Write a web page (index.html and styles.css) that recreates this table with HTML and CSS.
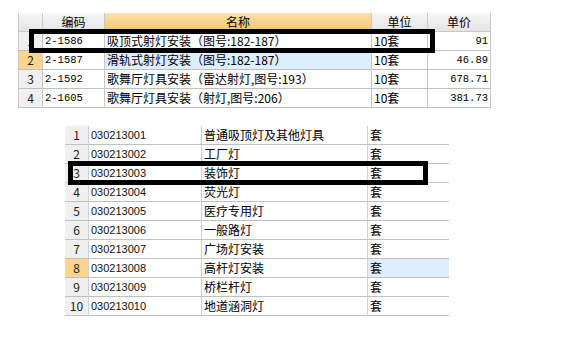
FILE: index.html
```html
<!DOCTYPE html>
<html>
<head>
<meta charset="utf-8">
<link rel="stylesheet" href="styles.css">
</head>
<body>
<div class="page">
  <div class="grid grid-a">
    <div class="row head">
      <div class="c num hd"></div>
      <div class="c code hd">编码</div>
      <div class="c name hd sel">名称</div>
      <div class="c unit hd">单位</div>
      <div class="c price hd">单价</div>
    </div>
    <div class="row">
      <div class="c num">1</div>
      <div class="c code mono">2-1586</div>
      <div class="c name">吸顶式射灯安装（图号:182-187）</div>
      <div class="c unit">10套</div>
      <div class="c price mono">91</div>
    </div>
    <div class="row">
      <div class="c num cur">2</div>
      <div class="c code mono">2-1587</div>
      <div class="c name focus">滑轨式射灯安装（图号:182-187）</div>
      <div class="c unit">10套</div>
      <div class="c price mono">46.89</div>
    </div>
    <div class="row">
      <div class="c num">3</div>
      <div class="c code mono">2-1592</div>
      <div class="c name">歌舞厅灯具安装（雷达射灯,图号:193）</div>
      <div class="c unit">10套</div>
      <div class="c price mono">678.71</div>
    </div>
    <div class="row">
      <div class="c num">4</div>
      <div class="c code mono">2-1605</div>
      <div class="c name">歌舞厅灯具安装（射灯,图号:206）</div>
      <div class="c unit">10套</div>
      <div class="c price mono">381.73</div>
    </div>
    <div class="mark mark-a"></div>
  </div>

  <div class="grid grid-b">
    <div class="row"><div class="c num">1</div><div class="c code2">030213001</div><div class="c name2">普通吸顶灯及其他灯具</div><div class="c unit2">套</div></div>
    <div class="row"><div class="c num">2</div><div class="c code2">030213002</div><div class="c name2">工厂灯</div><div class="c unit2">套</div></div>
    <div class="row"><div class="c num">3</div><div class="c code2">030213003</div><div class="c name2">装饰灯</div><div class="c unit2">套</div></div>
    <div class="row"><div class="c num">4</div><div class="c code2">030213004</div><div class="c name2">荧光灯</div><div class="c unit2">套</div></div>
    <div class="row"><div class="c num">5</div><div class="c code2">030213005</div><div class="c name2">医疗专用灯</div><div class="c unit2">套</div></div>
    <div class="row"><div class="c num">6</div><div class="c code2">030213006</div><div class="c name2">一般路灯</div><div class="c unit2">套</div></div>
    <div class="row"><div class="c num">7</div><div class="c code2">030213007</div><div class="c name2">广场灯安装</div><div class="c unit2">套</div></div>
    <div class="row"><div class="c num cur">8</div><div class="c code2">030213008</div><div class="c name2">高杆灯安装</div><div class="c unit2 focus">套</div></div>
    <div class="row"><div class="c num">9</div><div class="c code2">030213009</div><div class="c name2">桥栏杆灯</div><div class="c unit2">套</div></div>
    <div class="row"><div class="c num">10</div><div class="c code2">030213010</div><div class="c name2">地道涵洞灯</div><div class="c unit2">套</div></div>
    <div class="mark mark-b"></div>
  </div>
</div>
</body>
</html>
```

FILE: styles.css
```css
* { box-sizing: border-box; }
html, body { margin: 0; padding: 0; background: #fff; }
body {
  font-family: "Noto Sans CJK SC", "Noto Sans", sans-serif;
  font-size: 12px;
  color: #000;
  width: 563px;
  height: 348px;
  overflow: hidden;
}
.page { padding: 13px 0 0 18px; }

.grid { position: relative; display: flex; flex-direction: column; }
.row { display: flex; height: 19px; flex: none; }
.c {
  height: 19px;
  line-height: 18px;
  border-right: 1px solid #d2d2d2;
  border-bottom: 1px solid #c0c0c0;
  white-space: nowrap;
  overflow: hidden;
  padding-left: 2px;
}
.mono { font-family: "Liberation Mono", monospace; font-size: 10.5px; }

.grid-a { width: 473px; border-left: 1px solid #c8c8c8; }
.grid-a .num { width: 24px; }
.grid-a .code { width: 62px; }
.grid-a .name { width: 267px; }
.grid-a .unit { width: 56px; }
.grid-a .price { width: 63px; text-align: right; padding-right: 2px; }
.grid-a .c { border-right-color: #c8c8c8; }

.num {
  background: #f0f0f0;
  text-align: center;
  padding-left: 0;
  color: #222;
}
.num.cur { background: #ffd58e; }
.focus { background: #ddeeff; }

.grid-a .hd {
  text-align: center;
  padding: 0;
  font-family: "Noto Sans CJK SC", sans-serif;
  font-size: 12px;
  background: linear-gradient(#f7f7f7, #e4e4e4);
  border-bottom-color: #c8c8c8;
}
.grid-a .hd.sel { background: linear-gradient(#fce2ad, #f4c571); }

.grid-b { width: 384px; margin: 18px 0 0 47px; }
.grid-b .num { width: 24px; }
.code2 { width: 113px; font-family: "Liberation Sans", sans-serif; font-size: 11px; color: #111; }
.name2 { width: 166px; }
.unit2 { width: 81px; border-right: none; }

.mark { position: absolute; border: 5px solid #000; height: 24px; }
.mark-a { left: 10px; top: 16px; width: 406px; }
.mark-b { left: 3px; top: 35px; width: 360px; }
```
